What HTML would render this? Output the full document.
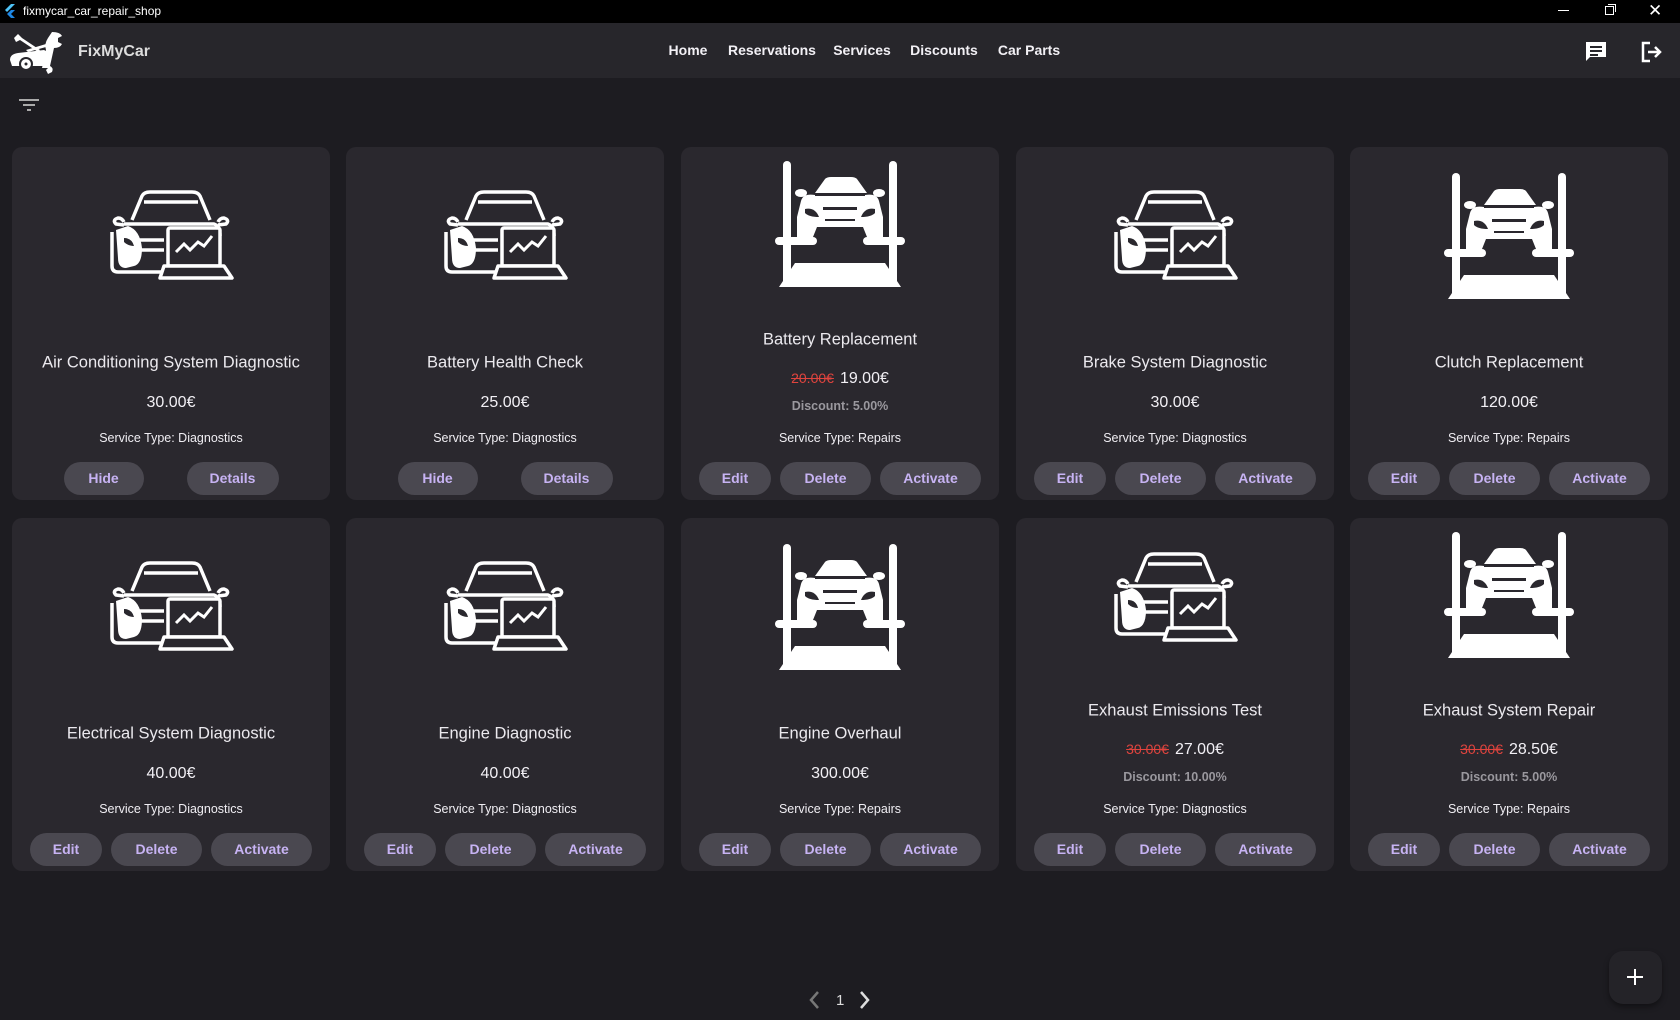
<!DOCTYPE html>
<html><head><meta charset="utf-8">
<style>
*{margin:0;padding:0;box-sizing:border-box}
body{width:1680px;height:1020px;background:#1d1c21;font-family:"Liberation Sans",sans-serif;color:#e6e4ea;position:relative;overflow:hidden}
.tb{position:absolute;left:0;top:0;width:1680px;height:23px;background:#000;color:#fff;font-size:12px}
.ab{position:absolute;left:0;top:23px;width:1680px;height:55px;background:#27262b}
.nav{position:absolute;top:0;height:55px;line-height:55px;font-weight:bold;font-size:14px;color:#f2f0f5;transform:translateX(-50%)}
.card{position:absolute;width:318px;height:353px;background:#2a282e;border-radius:10px}
.card svg.ic{position:absolute;left:50%;transform:translateX(-50%)}
.t{position:absolute;left:0;width:100%;text-align:center;transform:translateY(-50%)}
.title{font-size:16.5px;color:#ebe9ee}
.price{font-size:16px;color:#f2f0f5}
.old{color:#e0443e;text-decoration:line-through;font-size:14px;margin-right:6px}
.disc{font-size:12.5px;font-weight:bold;color:#9a989e}
.st{font-size:12.5px;color:#f0eef3}
.btns{position:absolute;left:0;top:315px;width:100%;display:flex;justify-content:center;gap:9px}
.btns.two{gap:43px}
.b{height:33px;line-height:33px;border-radius:17px;background:#4a4850;color:#c7b3f3;font-weight:bold;font-size:14px;text-align:center}
</style></head><body>
<svg width="0" height="0" style="position:absolute">
<defs>
<symbol id="diag" viewBox="0 0 134 91">
<g fill="none" stroke="#fff" stroke-width="3.5" stroke-linejoin="round">
<path d="M28 30 L38 6 Q40 2 46 2 L88 2 Q94 2 96 6 L106 30"/>
<path d="M40 12 L94 12"/>
<path d="M20 32 Q18 28 14 28 Q8 30 12 34 L20 35"/>
<path d="M114 32 Q116 28 120 28 Q126 30 122 34 L114 35"/>
<path d="M20 34 L110 34 Q116 36 116 46"/>
<path d="M8 42 L8 76 Q8 82 14 82 L60 82"/>
<path d="M30 50 L60 50 M36 60 L60 60"/>
</g>
<path d="M12 40 L24 36 Q36 40 38 58 Q38 74 30 76 L22 78 Q14 78 14 68 Z" fill="#fff"/>
<path d="M20 48 Q28 48 30 56 Q24 56 20 52Z" fill="#2a282e"/>
<rect x="64" y="38" width="52" height="38" rx="2" fill="#2a282e" stroke="#fff" stroke-width="3.5"/>
<path d="M72 62 L80 54 L86 60 L94 52 L100 56 L108 46" fill="none" stroke="#fff" stroke-width="3"/>
<path d="M60 76 L120 76 L128 88 L56 88 Z" fill="#2a282e" stroke="#fff" stroke-width="3.5" stroke-linejoin="round"/>
</symbol>
<symbol id="lift" viewBox="0 0 134 128">
<g fill="#fff">
<rect x="10" y="0" width="8" height="124" rx="4"/>
<rect x="116" y="0" width="8" height="124" rx="4"/>
<rect x="2" y="76" width="42" height="8" rx="4"/>
<rect x="90" y="76" width="42" height="8" rx="4"/>
<path d="M42 32 L52 18 Q54 16 58 16 L78 16 Q82 16 84 18 L94 32 Z"/>
<path d="M28 40 Q30 32 42 34 L92 34 Q104 32 106 40 L110 56 L110 76 L94 76 L90 66 L44 66 L40 76 L24 76 L24 56 Z"/>
<ellipse cx="28" cy="32" rx="6" ry="4"/><ellipse cx="106" cy="32" rx="6" ry="4"/>
<path d="M6 126 L22 102 L112 102 L128 126 Z"/>
</g>
<g fill="#2a282e">
<path d="M32 48 Q42 46 46 56 Q36 56 32 52Z"/><path d="M102 48 Q92 46 88 56 Q98 56 102 52Z"/>
<rect x="50" y="46" width="34" height="3"/><rect x="52" y="58" width="30" height="2"/>
<rect x="42" y="33" width="50" height="2"/>
</g>
</symbol>
</defs></svg>

<div class="tb">
<svg style="position:absolute;left:4px;top:4px" width="12" height="14" viewBox="0 0 12 14"><path d="M7 0 L11 0 L3 8 L1 6Z" fill="#4fc3f7"/><path d="M7 6 L11 6 L7 10 L11 14 L7 14 L3 10Z" fill="#1e88e5"/></svg>
<span style="position:absolute;left:23px;top:4px">fixmycar_car_repair_shop</span>
<div style="position:absolute;left:1558px;top:10px;width:11px;height:1px;background:#fff"></div>
<div style="position:absolute;left:1605px;top:6px;width:9px;height:9px;border:1px solid #fff"></div>
<div style="position:absolute;left:1608px;top:4px;width:8px;height:8px;border-top:1px solid #fff;border-right:1px solid #fff"></div>
<span style="position:absolute;left:1648px;top:1px;font-size:17px">✕</span>
</div>

<div class="ab">
<svg style="position:absolute;left:8px;top:7px" width="56" height="44" viewBox="0 0 56 44">
<g fill="#fff">
<path d="M6 8 L10 4 L14 8 L32 20 L30 22 L12 10 L8 12Z"/>
<path d="M18 20 L38 14 L38 17 L20 22Z"/>
<path d="M2 30 Q2 24 10 23 L36 20 L40 22 L36 36 L4 36Z"/>
<circle cx="18" cy="34" r="7" fill="#27262b"/><circle cx="18" cy="34" r="5"/>
<path d="M44 2 Q52 2 54 6 L50 8 L50 12 L54 14 Q52 18 46 18 L42 36 Q46 38 44 42 L40 44 L38 40 L40 38 L34 38 L38 20 Q36 14 40 8Z"/>
</g>
<circle cx="18" cy="34" r="1.5" fill="#27262b"/>
</svg>
<span style="position:absolute;left:78px;top:20px;font-weight:bold;font-size:16px;color:#ddd">FixMyCar</span>
<span class="nav" style="left:688px">Home</span>
<span class="nav" style="left:772px">Reservations</span>
<span class="nav" style="left:862px">Services</span>
<span class="nav" style="left:944px">Discounts</span>
<span class="nav" style="left:1029px">Car Parts</span>
<svg style="position:absolute;left:1585px;top:18px" width="22" height="22" viewBox="0 0 22 22"><path d="M1 1 H21 V16 H5 L1 20Z" fill="#fff"/><rect x="5" y="5" width="12" height="2" fill="#27262b"/><rect x="5" y="9" width="12" height="2" fill="#27262b"/><rect x="5" y="13" width="8" height="2" fill="#27262b"/></svg>
<svg style="position:absolute;left:1641px;top:18px" width="22" height="22" viewBox="0 0 22 22"><path d="M9 2 H2 V20 H9" fill="none" stroke="#fff" stroke-width="2.5"/><path d="M7 11 H19 M14 6 L19 11 L14 16" fill="none" stroke="#fff" stroke-width="2.5"/></svg>
</div>

<svg style="position:absolute;left:19px;top:99px" width="20" height="14" viewBox="0 0 20 14"><rect x="0" y="0" width="20" height="2" fill="#aaa"/><rect x="4" y="5" width="12" height="2" fill="#aaa"/><rect x="8" y="10" width="4" height="2" fill="#aaa"/></svg>

<!-- Row 1 -->
<div class="card" style="left:12px;top:147px">
<svg class="ic" style="top:43px" width="134" height="91"><use href="#diag"/></svg>
<div class="t title" style="top:216px">Air Conditioning System Diagnostic</div>
<div class="t price" style="top:256px">30.00€</div>
<div class="t st" style="top:291px">Service Type: Diagnostics</div>
<div class="btns two"><div class="b" style="width:80px">Hide</div><div class="b" style="width:92px">Details</div></div>
</div>
<div class="card" style="left:346px;top:147px">
<svg class="ic" style="top:43px" width="134" height="91"><use href="#diag"/></svg>
<div class="t title" style="top:216px">Battery Health Check</div>
<div class="t price" style="top:256px">25.00€</div>
<div class="t st" style="top:291px">Service Type: Diagnostics</div>
<div class="btns two"><div class="b" style="width:80px">Hide</div><div class="b" style="width:92px">Details</div></div>
</div>
<div class="card" style="left:681px;top:147px">
<svg class="ic" style="top:14px" width="134" height="128"><use href="#lift"/></svg>
<div class="t title" style="top:193px">Battery Replacement</div>
<div class="t price" style="top:232px"><span class="old">20.00€</span>19.00€</div>
<div class="t disc" style="top:259px">Discount: 5.00%</div>
<div class="t st" style="top:291px">Service Type: Repairs</div>
<div class="btns"><div class="b" style="width:72px">Edit</div><div class="b" style="width:91px">Delete</div><div class="b" style="width:101px">Activate</div></div>
</div>
<div class="card" style="left:1016px;top:147px">
<svg class="ic" style="top:43px" width="134" height="91"><use href="#diag"/></svg>
<div class="t title" style="top:216px">Brake System Diagnostic</div>
<div class="t price" style="top:256px">30.00€</div>
<div class="t st" style="top:291px">Service Type: Diagnostics</div>
<div class="btns"><div class="b" style="width:72px">Edit</div><div class="b" style="width:91px">Delete</div><div class="b" style="width:101px">Activate</div></div>
</div>
<div class="card" style="left:1350px;top:147px">
<svg class="ic" style="top:26px" width="134" height="128"><use href="#lift"/></svg>
<div class="t title" style="top:216px">Clutch Replacement</div>
<div class="t price" style="top:256px">120.00€</div>
<div class="t st" style="top:291px">Service Type: Repairs</div>
<div class="btns"><div class="b" style="width:72px">Edit</div><div class="b" style="width:91px">Delete</div><div class="b" style="width:101px">Activate</div></div>
</div>

<!-- Row 2 -->
<div class="card" style="left:12px;top:518px">
<svg class="ic" style="top:43px" width="134" height="91"><use href="#diag"/></svg>
<div class="t title" style="top:216px">Electrical System Diagnostic</div>
<div class="t price" style="top:256px">40.00€</div>
<div class="t st" style="top:291px">Service Type: Diagnostics</div>
<div class="btns"><div class="b" style="width:72px">Edit</div><div class="b" style="width:91px">Delete</div><div class="b" style="width:101px">Activate</div></div>
</div>
<div class="card" style="left:346px;top:518px">
<svg class="ic" style="top:43px" width="134" height="91"><use href="#diag"/></svg>
<div class="t title" style="top:216px">Engine Diagnostic</div>
<div class="t price" style="top:256px">40.00€</div>
<div class="t st" style="top:291px">Service Type: Diagnostics</div>
<div class="btns"><div class="b" style="width:72px">Edit</div><div class="b" style="width:91px">Delete</div><div class="b" style="width:101px">Activate</div></div>
</div>
<div class="card" style="left:681px;top:518px">
<svg class="ic" style="top:26px" width="134" height="128"><use href="#lift"/></svg>
<div class="t title" style="top:216px">Engine Overhaul</div>
<div class="t price" style="top:256px">300.00€</div>
<div class="t st" style="top:291px">Service Type: Repairs</div>
<div class="btns"><div class="b" style="width:72px">Edit</div><div class="b" style="width:91px">Delete</div><div class="b" style="width:101px">Activate</div></div>
</div>
<div class="card" style="left:1016px;top:518px">
<svg class="ic" style="top:34px" width="134" height="91"><use href="#diag"/></svg>
<div class="t title" style="top:193px">Exhaust Emissions Test</div>
<div class="t price" style="top:232px"><span class="old">30.00€</span>27.00€</div>
<div class="t disc" style="top:259px">Discount: 10.00%</div>
<div class="t st" style="top:291px">Service Type: Diagnostics</div>
<div class="btns"><div class="b" style="width:72px">Edit</div><div class="b" style="width:91px">Delete</div><div class="b" style="width:101px">Activate</div></div>
</div>
<div class="card" style="left:1350px;top:518px">
<svg class="ic" style="top:14px" width="134" height="128"><use href="#lift"/></svg>
<div class="t title" style="top:193px">Exhaust System Repair</div>
<div class="t price" style="top:232px"><span class="old">30.00€</span>28.50€</div>
<div class="t disc" style="top:259px">Discount: 5.00%</div>
<div class="t st" style="top:291px">Service Type: Repairs</div>
<div class="btns"><div class="b" style="width:72px">Edit</div><div class="b" style="width:91px">Delete</div><div class="b" style="width:101px">Activate</div></div>
</div>

<svg style="position:absolute;left:808px;top:990px" width="12" height="20" viewBox="0 0 12 20"><path d="M10 2 L3 10 L10 18" fill="none" stroke="#777" stroke-width="2.5"/></svg>
<span style="position:absolute;left:836px;top:992px;font-size:15px;color:#ddd">1</span>
<svg style="position:absolute;left:859px;top:990px" width="12" height="20" viewBox="0 0 12 20"><path d="M2 2 L9 10 L2 18" fill="none" stroke="#ddd" stroke-width="2.5"/></svg>

<div style="position:absolute;left:1609px;top:951px;width:53px;height:53px;border-radius:14px;background:#242328;box-shadow:0 3px 6px rgba(0,0,0,.4)"></div>
<div style="position:absolute;left:1627px;top:976px;width:16px;height:2px;background:#fff"></div>
<div style="position:absolute;left:1634px;top:969px;width:2px;height:16px;background:#fff"></div>
</body></html>
